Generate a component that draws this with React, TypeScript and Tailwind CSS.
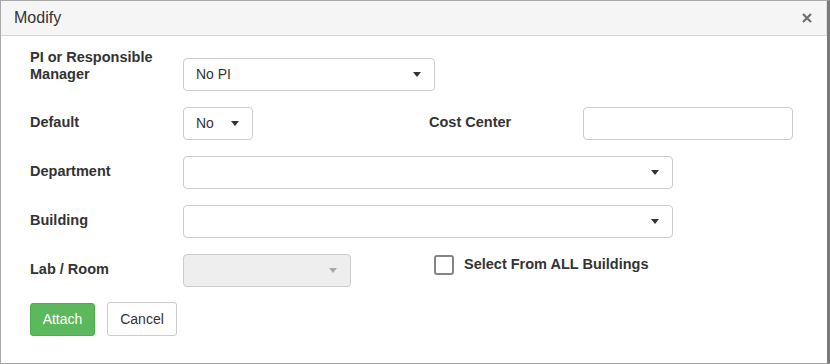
import React from 'react';

const font = "font-['Liberation_Sans',Arial,sans-serif]";

const Caret = ({ muted }: { muted?: boolean }) => (
    <svg width="8" height="5" viewBox="0 0 8 5" className="shrink-0">
        <path d="M0 0 L8 0 L4 5 Z" fill={muted ? '#aaa' : '#333'} />
    </svg>
);

const Select = ({ value, width, disabled }: { value?: string; width: string; disabled?: boolean }) => (
    <div
        className={`${width} h-[33px] flex items-center justify-between pl-3 pr-[13px] border border-[#ccc] rounded-[4px] text-[14px] text-[#333] ${
            disabled ? 'bg-[#eeeeee]' : 'bg-white'
        }`}
    >
        <span>{value}</span>
        <Caret muted={disabled} />
    </div>
);

const Label = ({ children, className = '' }: { children: React.ReactNode; className?: string }) => (
    <div className={`font-bold text-[14.5px] leading-[17px] text-[#333] ${className}`}>{children}</div>
);

export default function App() {
    return (
        <div className={`w-[830px] h-[364px] bg-white ${font}`}>
            <div className="w-[830px] h-[364px] flex flex-col border-t border-l border-b border-[#a8a8a8] border-r-[3px] border-r-[#7a7a7a]">
                {/* Header */}
                <div className="h-[35px] shrink-0 flex items-center justify-between pl-[13px] pr-[14px] bg-[#f5f5f5] border-b border-[#d4d4d4] border-r border-r-[#e0e0e0]">
                    <span className="text-[16px] text-[#333]">Modify</span>
                    <svg width="10" height="10" viewBox="0 0 10 10">
                        <path d="M1 1 L9 9 M9 1 L1 9" stroke="#6f6f6f" strokeWidth="2.2" />
                    </svg>
                </div>

                {/* Body */}
                <div className="flex flex-col gap-4 pl-[29px] pt-[22px]">
                    <div className="flex items-start">
                        <Label className="w-[153px] -mt-[9px]">
                            PI or Responsible
                            <br />
                            Manager
                        </Label>
                        <Select value="No PI" width="w-[252px]" />
                    </div>

                    <div className="flex items-center">
                        <Label className="w-[153px] -mt-[2px]">Default</Label>
                        <Select value="No" width="w-[70px]" />
                        <Label className="ml-[176px] w-[154px] -mt-[2px]">Cost Center</Label>
                        <div className="w-[210px] h-[33px] border border-[#ccc] rounded-[4px] bg-white" />
                    </div>

                    <div className="flex items-center">
                        <Label className="w-[153px] -mt-[2px]">Department</Label>
                        <Select width="w-[490px]" />
                    </div>

                    <div className="flex items-center">
                        <Label className="w-[153px] -mt-[2px]">Building</Label>
                        <Select width="w-[490px]" />
                    </div>

                    <div className="flex items-start">
                        <Label className="w-[153px] mt-[7px]">Lab / Room</Label>
                        <Select width="w-[168px]" disabled />
                        <div className="ml-[83px] mt-[1px] flex items-center">
                            <div className="w-[20px] h-[20px] border-2 border-[#858585] rounded-[3px] bg-white" />
                            <Label className="ml-[10px] -mt-[1px]">Select From ALL Buildings</Label>
                        </div>
                    </div>

                    <div className="flex items-center gap-[12px] -mt-[1px]">
                        <button className="w-[65px] h-[33px] rounded-[3px] bg-[#5cb85c] border border-[#4cae4c] text-white text-[14px]">
                            Attach
                        </button>
                        <button className="w-[70px] h-[34px] rounded-[3px] bg-white border border-[#ccc] text-[#333] text-[14px]">
                            Cancel
                        </button>
                    </div>
                </div>
            </div>
        </div>
    );
}
